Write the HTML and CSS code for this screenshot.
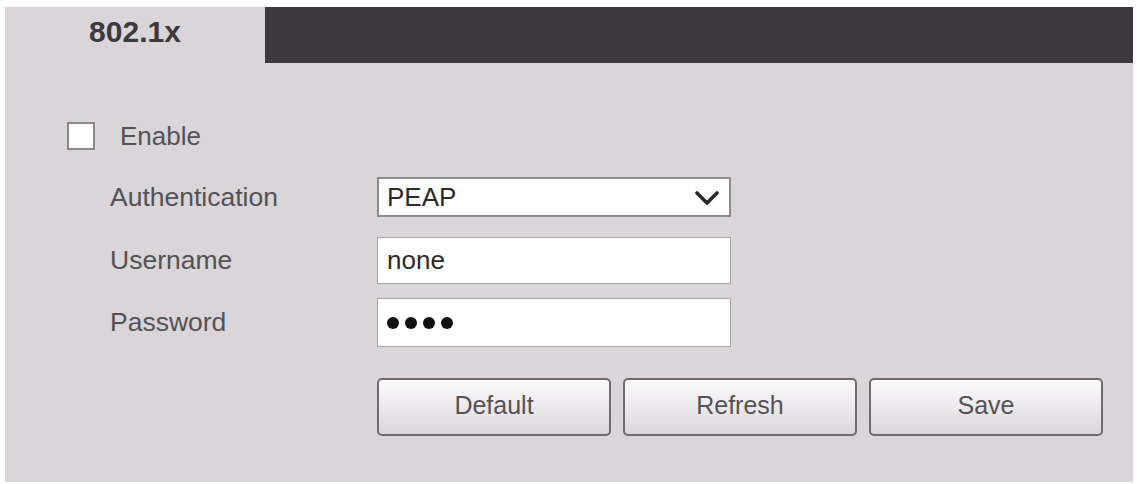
FILE: index.html
```html
<!DOCTYPE html>
<html>
<head>
<meta charset="utf-8">
<link rel="stylesheet" href="styles.css">
</head>
<body>
<div class="panel">
  <div class="header">
    <div class="tab">802.1x</div>
    <div class="bar"></div>
  </div>
  <div class="content">
    <div class="enable-row">
      <span class="checkbox"></span>
      <span class="enable-label">Enable</span>
    </div>
    <div class="form">
      <div class="row row-select">
        <span class="label">Authentication</span>
        <div class="select">
          <span class="value">PEAP</span>
          <svg class="chevron" width="24" height="15" viewBox="0 0 24 15"><path d="M2 2 L12 12 L22 2" fill="none" stroke="#2a2a2a" stroke-width="3.6" stroke-linecap="round" stroke-linejoin="round"/></svg>
        </div>
      </div>
      <div class="row row-user">
        <span class="label">Username</span>
        <div class="input"><span class="value">none</span></div>
      </div>
      <div class="row row-pass">
        <span class="label">Password</span>
        <div class="input"><span class="dots"><i></i><i></i><i></i><i></i></span></div>
      </div>
      <div class="buttons">
        <button class="btn">Default</button>
        <button class="btn">Refresh</button>
        <button class="btn">Save</button>
      </div>
    </div>
  </div>
</div>
</body>
</html>
```
FILE: styles.css
```css
html, body {
  margin: 0;
  padding: 0;
  background: #ffffff;
}
body {
  padding: 7px 4px 2px 5px;
  font-family: "Liberation Sans", Arial, sans-serif;
}
.panel {
  width: 1128px;
  height: 475px;
  background: #d9d5d9;
  display: flex;
  flex-direction: column;
}
.header {
  display: flex;
  height: 56px;
}
.tab {
  width: 260px;
  display: flex;
  align-items: center;
  justify-content: center;
  font-size: 30px;
  font-weight: bold;
  color: #3c3a3c;
  padding-bottom: 6px;
  box-sizing: border-box;
}
.bar {
  flex: 1;
  background: #3c383c;
}
.content {
  padding: 59px 0 0 62px;
}
.enable-row {
  display: flex;
  align-items: center;
  height: 28px;
}
.checkbox {
  width: 24px;
  height: 24px;
  border: 2px solid #8a868a;
  background: #ffffff;
}
.enable-label {
  margin-left: 25px;
  font-size: 26px;
  color: #555255;
}
.form {
  margin-left: 43px;
  margin-top: 27px;
  display: flex;
  flex-direction: column;
}
.row {
  display: flex;
  align-items: center;
}
.label {
  width: 267px;
  font-size: 26.5px;
  color: #555255;
}
.select {
  width: 354px;
  height: 40px;
  border: 2px solid #8f8b8f;
  background: #ffffff;
  display: flex;
  align-items: center;
  justify-content: space-between;
  padding: 0 10px 0 8px;
  box-sizing: border-box;
}
.select .value, .input .value {
  font-size: 26px;
  color: #2c2a2c;
}
.chevron {
  display: block;
  margin-top: 2px;
}
.row-user {
  margin-top: 20px;
}
.row-pass {
  margin-top: 14px;
}
.input {
  width: 354px;
  height: 47px;
  border: 1.5px solid #a8a4a8;
  background: #ffffff;
  display: flex;
  align-items: center;
  padding-left: 9px;
  box-sizing: border-box;
}
.row-pass .input {
  height: 49px;
}
.dots {
  display: flex;
  gap: 6px;
}
.dots i {
  width: 12px;
  height: 12px;
  border-radius: 50%;
  background: #111111;
}
.buttons {
  display: flex;
  gap: 12px;
  margin-left: 267px;
  margin-top: 31px;
}
.btn {
  width: 234px;
  height: 58px;
  border: 2px solid #6f6b6f;
  border-radius: 5px;
  background: linear-gradient(#fbfafb 0%, #eeebee 45%, #d9d5d9 100%);
  font-family: "Liberation Sans", Arial, sans-serif;
  font-size: 25px;
  color: #555255;
  padding: 0 0 4px 0;
}
```
